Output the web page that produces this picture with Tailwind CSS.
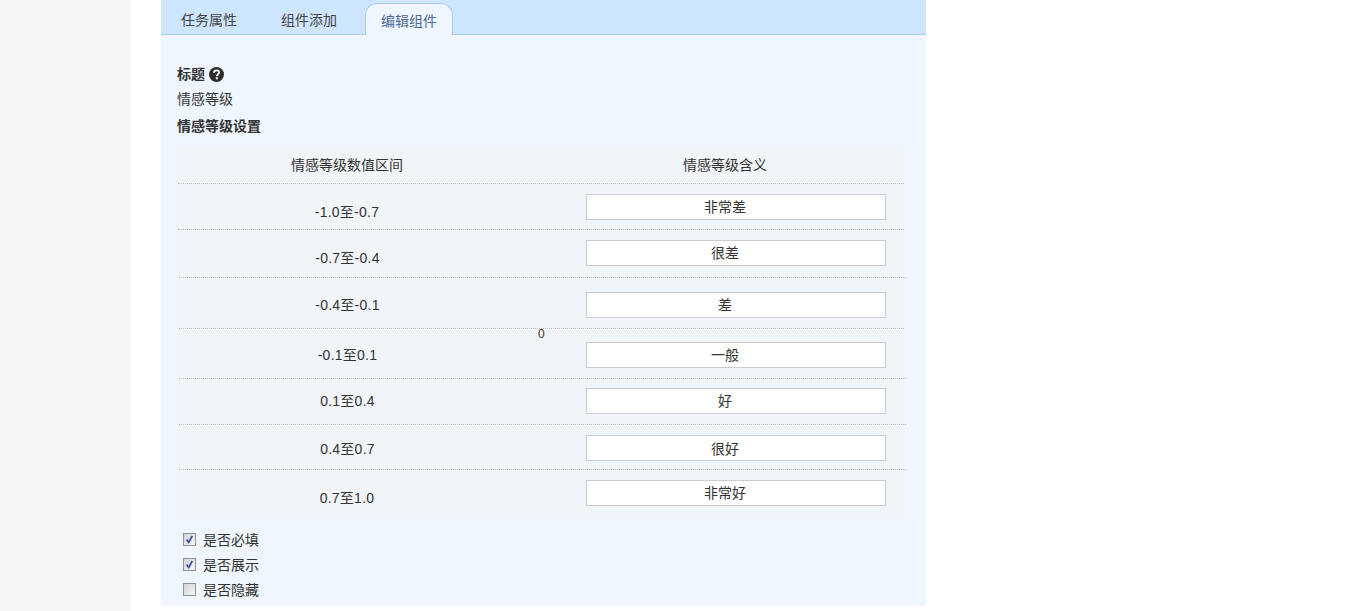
<!DOCTYPE html>
<html lang="zh">
<head>
    <meta charset="UTF-8">
    <title>编辑组件</title>
    <script src="https://cdn.jsdelivr.net/npm/@tailwindcss/browser@4"></script>
</head>
<body class="h-[611px] overflow-hidden bg-white text-[14px] text-[#333] font-['Liberation_Sans','Noto_Sans_CJK_SC',sans-serif]">
<div class="flex h-[611px]">
    <!-- left gutter -->
    <div class="w-[131px] bg-[#f5f5f5]"></div>
    <div class="w-[30px]"></div>

    <div class="w-[765px] h-[606px] bg-[#eff6ff]">
        <!-- tabs -->
        <div class="flex h-[35px] border-b border-[#a3cdf5] bg-[#cee5ff]">
            <a class="w-[100px] h-[34px] pl-[20px] pt-[10px] leading-[20px] text-[#444]">任务属性</a>
            <a class="w-[104px] h-[34px] pl-[20px] pt-[10px] leading-[20px] text-[#444]">组件添加</a>
            <a class="w-[88px] h-[32px] mt-[3px] pl-[15px] pt-[7px] leading-[20px] rounded-t-[12px] border border-b-0 border-[#a3cdf5] bg-[#eff6ff] text-[#4a6a94]">编辑组件</a>
        </div>

        <div class="px-[16px]">
            <div class="mt-[29px] h-[20px] flex items-center gap-[4px] font-bold">
                <span>标题</span>
                <svg class="w-[15px] h-[15px]" viewBox="0 0 15 15">
                    <circle cx="7.5" cy="7.5" r="7.5" fill="#2d2d2d"/>
                    <path d="M5 5.8c0-1.6 1.1-2.4 2.6-2.4s2.5.9 2.5 2.2c0 1.9-2.3 1.9-2.3 3.6" fill="none" stroke="#fff" stroke-width="1.8"/>
                    <rect x="6.8" y="10.3" width="2" height="2" fill="#fff"/>
                </svg>
            </div>
            <div class="mt-[5px] h-[20px] leading-[20px]">情感等级</div>
            <div class="mt-[7px] h-[20px] leading-[20px] font-bold">情感等级设置</div>

            <!-- level table -->
            <div class="relative mt-[10px] w-[727px] ml-[1px] bg-[#f1f4f9]">
                <div class="flex w-[726px] h-[38px] border-b border-dotted border-[#c0c0c0]">
                    <div class="w-[338px] pt-[9px] leading-[20px] text-center">情感等级数值区间</div>
                    <div class="w-[388px] pl-[30px] pt-[9px] leading-[20px] text-center">情感等级含义</div>
                </div>
                <div class="flex w-[726px] h-[46px] border-b border-dotted border-[#c0c0c0]">
                    <div class="w-[338px] pt-[18px] text-center leading-[20px] tracking-[0.25px]">-1.0至-0.7</div>
                    <input class="ml-[70px] mt-[10px] w-[300px] h-[26px] pb-[2px] border border-[#ccc] bg-white pr-[22px] text-center" value="非常差">
                </div>
                <div class="flex ml-[1px] w-[727px] h-[48px] border-b border-dotted border-[#c0c0c0]">
                    <div class="w-[337px] pt-[18px] text-center leading-[20px] tracking-[0.25px]">-0.7至-0.4</div>
                    <input class="ml-[70px] mt-[10px] w-[300px] h-[26px] pb-[2px] border border-[#ccc] bg-white pr-[22px] text-center" value="很差">
                </div>
                <div class="flex ml-[1px] w-[725px] h-[51px] border-b border-dotted border-[#c0c0c0]">
                    <div class="w-[337px] pt-[17px] text-center leading-[20px] tracking-[0.25px]">-0.4至-0.1</div>
                    <input class="ml-[70px] mt-[14px] w-[300px] h-[26px] pb-[2px] border border-[#ccc] bg-white pr-[22px] text-center" value="差">
                </div>
                <div class="flex ml-[1px] w-[727px] h-[50px] border-b border-dotted border-[#c0c0c0]">
                    <div class="w-[337px] pt-[16px] text-center leading-[20px] tracking-[0.25px]">-0.1至0.1</div>
                    <input class="ml-[70px] mt-[13px] w-[300px] h-[26px] pb-[2px] border border-[#ccc] bg-white pr-[22px] text-center" value="一般">
                </div>
                <div class="flex ml-[1px] w-[727px] h-[46px] border-b border-dotted border-[#c0c0c0]">
                    <div class="w-[337px] pt-[12px] text-center leading-[20px] tracking-[0.25px]">0.1至0.4</div>
                    <input class="ml-[70px] mt-[9px] w-[300px] h-[26px] pb-[2px] border border-[#ccc] bg-white pr-[22px] text-center" value="好">
                </div>
                <div class="flex ml-[1px] w-[727px] h-[45px] border-b border-dotted border-[#c0c0c0]">
                    <div class="w-[337px] pt-[14px] text-center leading-[20px] tracking-[0.25px]">0.4至0.7</div>
                    <input class="ml-[70px] mt-[10px] w-[300px] h-[26px] border border-[#ccc] bg-white pr-[22px] text-center" value="很好">
                </div>
                <div class="flex h-[49px]">
                    <div class="w-[338px] pt-[18px] text-center leading-[20px] tracking-[0.25px]">0.7至1.0</div>
                    <input class="ml-[70px] mt-[10px] w-[300px] h-[26px] pb-[2px] border border-[#ccc] bg-white pr-[22px] text-center" value="非常好">
                </div>
                <span class="absolute left-[360px] top-[181px] text-[12px] leading-[14px]">0</span>
            </div>

            <!-- options -->
            <div class="mt-[8px] pl-[6px]">
                <label class="flex h-[25px] items-center gap-[7px]">
                    <span class="flex w-[13px] h-[13px] items-center justify-center border border-[#919191] bg-linear-to-br from-[#d4d4d4] to-[#f6f6f6]">
                        <svg class="w-[11px] h-[11px]" viewBox="0 0 11 11"><path d="M2.5 5.5l2.2 3 3.6-6.5" fill="none" stroke="#3f4f9f" stroke-width="1.7"/></svg>
                    </span>
                    <span class="pt-[2px]">是否必填</span>
                </label>
                <label class="flex h-[25px] items-center gap-[7px]">
                    <span class="flex w-[13px] h-[13px] items-center justify-center border border-[#919191] bg-linear-to-br from-[#d4d4d4] to-[#f6f6f6]">
                        <svg class="w-[11px] h-[11px]" viewBox="0 0 11 11"><path d="M2.5 5.5l2.2 3 3.6-6.5" fill="none" stroke="#3f4f9f" stroke-width="1.7"/></svg>
                    </span>
                    <span class="pt-[2px]">是否展示</span>
                </label>
                <label class="flex h-[25px] items-center gap-[7px]">
                    <span class="w-[13px] h-[13px] border border-[#919191] bg-linear-to-br from-[#d4d4d4] to-[#f6f6f6]"></span>
                    <span class="pt-[2px]">是否隐藏</span>
                </label>
            </div>
        </div>
    </div>
</div>
</body>
</html>
